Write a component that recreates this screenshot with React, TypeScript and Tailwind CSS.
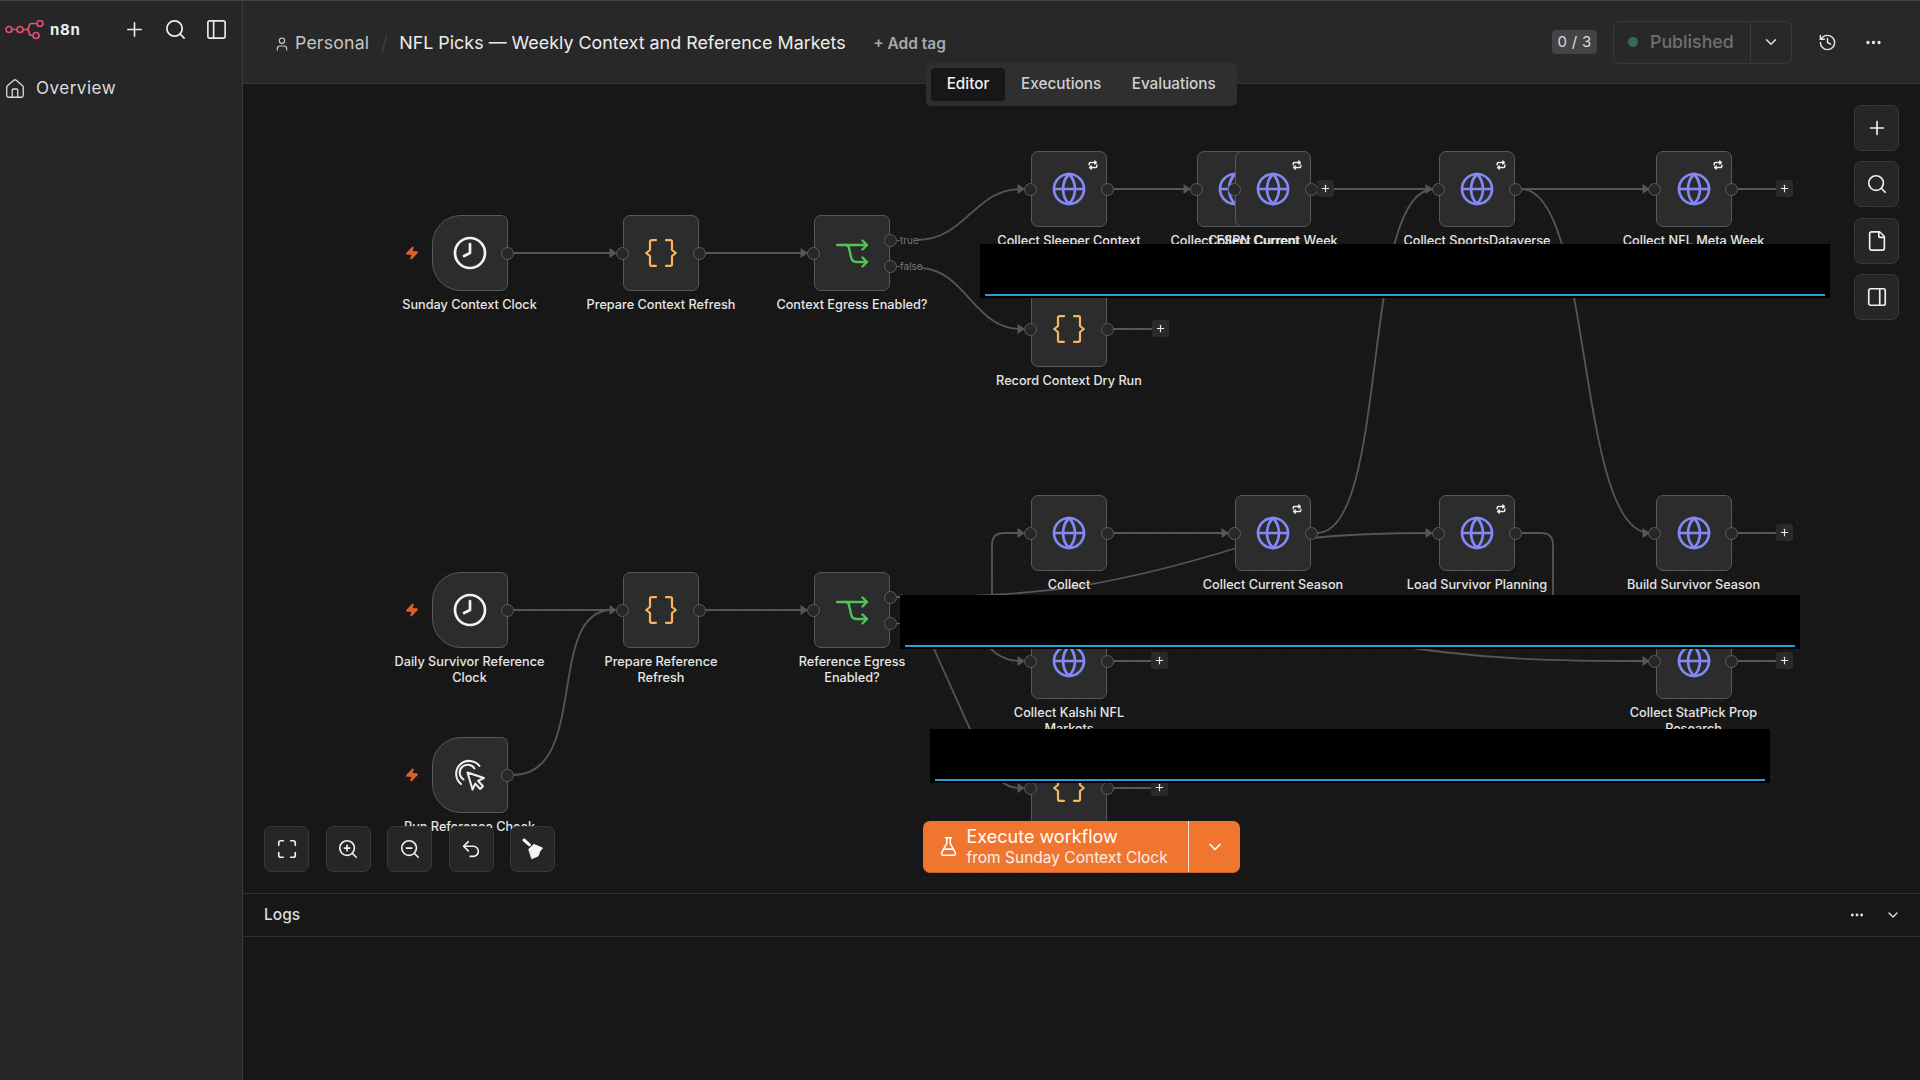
import React from "react";
import {
  Plus, Search, PanelLeft, PanelRight, House, User, Globe, Clock, FlaskConical, ChevronDown,
  History, Ellipsis, Maximize, ZoomIn, ZoomOut, Undo2, File, Zap,
} from "lucide-react";

const OX = 243;
const OY = 84;

type Kind = "globe" | "code" | "if" | "clock" | "click";
type N = {
  x: number; y: number; label: string; kind: Kind; retry?: boolean; plus?: number; hideIn?: boolean; trigger?: boolean; outs?: number[];
};

const nodes: N[] = [
  { x: 431.5, y: 215, label: "Sunday Context Clock", kind: "clock", trigger: true, hideIn: true },
  { x: 623, y: 215, label: "Prepare Context Refresh", kind: "code" },
  { x: 814, y: 215, label: "Context Egress Enabled?", kind: "if", outs: [25, 51] },
  { x: 1031, y: 151, label: "Collect Sleeper Context", kind: "globe", retry: true },
  { x: 1197, y: 151, label: "Collect ESPN Current", kind: "globe", retry: true },
  { x: 1235, y: 151, label: "Collect Current Week", kind: "globe", retry: true, plus: 1317 },
  { x: 1439, y: 151, label: "Collect SportsDataverse", kind: "globe", retry: true },
  { x: 1655.5, y: 151, label: "Collect NFL Meta Week", kind: "globe", retry: true, plus: 1776 },
  { x: 1031, y: 291, label: "Record Context Dry Run", kind: "code", plus: 1152 },
  { x: 431.5, y: 572, label: "Daily Survivor Reference Clock", kind: "clock", trigger: true, hideIn: true },
  { x: 623, y: 572, label: "Prepare Reference Refresh", kind: "code" },
  { x: 814, y: 572, label: "Reference Egress Enabled?", kind: "if", outs: [25, 51] },
  { x: 431.5, y: 737, label: "Run Reference Check", kind: "click", trigger: true, hideIn: true },
  { x: 1031, y: 495, label: "Collect", kind: "globe" },
  { x: 1235, y: 495, label: "Collect Current Season", kind: "globe", retry: true },
  { x: 1439, y: 495, label: "Load Survivor Planning", kind: "globe", retry: true },
  { x: 1655.5, y: 495, label: "Build Survivor Season", kind: "globe", plus: 1776 },
  { x: 1031, y: 623, label: "Collect Kalshi NFL Markets", kind: "globe", plus: 1151 },
  { x: 1655.5, y: 623, label: "Collect StatPick Prop Research", kind: "globe", plus: 1776 },
  { x: 1031, y: 750, label: "Record Reference Dry Run", kind: "code", plus: 1151 },
];

const wires = [
  "M513 253H612", "M705 253H803", "M917 240C965 240 975 189 1020 189", "M921 268C965 270 975 329 1020 329",
  "M1113 189H1192", "M1334 189H1434", "M1113 329H1152",
  "M1317 533C1390 533 1360 189 1434 189", "M1521 189H1650", "M1521 189C1594 189 1575 533 1650 533", "M1737 189H1776",
  "M513 610H612", "M513 775C590 775 545 610 612 610", "M705 610H803",
  "M1113 533H1230", "M897 597C1030 597 1100 590 1240 547", "M1313 538C1350 534 1390 533 1434 533",
  "M992 600V545Q992 533 1004 533H1020", "M1521 533H1541Q1553 533 1553 545V600",
  "M1737 533H1776", "M975 630C990 650 1000 661 1020 661", "M1113 661H1151", "M1360 640C1480 661 1560 661 1650 661", "M1737 661H1776",
  "M934 649L970 729L1000 780Q1008 788 1020 788", "M1113 788H1151",
];

const arrows: [number, number][] = [
  [617, 253], [808, 253], [1025, 189], [1025, 329], [1191, 189], [1433, 189], [1650, 189],
  [617, 610], [808, 610], [1025, 533], [1229, 533], [1433, 533], [1650, 533], [1025, 661], [1650, 661], [1025, 788],
];

function BracesIcon() {
  return (
    <svg width="32" height="28" viewBox="0 0 32 28" fill="none" stroke="#f5b562" strokeWidth="2.2" strokeLinejoin="round" strokeLinecap="round">
      <path d="M11 1.2H6.5A1.5 1.5 0 0 0 5 2.7V11L1.2 14 5 17v8.3a1.5 1.5 0 0 0 1.5 1.5H11" />
      <path d="M21 1.2h4.5A1.5 1.5 0 0 1 27 2.7V11l3.8 3-3.8 3v8.3a1.5 1.5 0 0 1-1.5 1.5H21" />
    </svg>
  );
}

function IfIcon() {
  return (
    <svg width="33" height="30" viewBox="0 0 33 30" fill="none" stroke="#4fc35c" strokeWidth="2.4" strokeLinejoin="round" strokeLinecap="round">
      <path d="M1 7H31M26.500 2.500 31 7l-4.500 4.500" />
      <path d="M10 7c2 0 2.600 1 3 3l2 9c.6 3.200 2.500 5 5.500 5H31M26.500 19.500 31 24l-4.500 4.500" />
    </svg>
  );
}

function ClickIcon() {
  return (
    <svg width="32" height="32" viewBox="0 0 32 32" fill="none" stroke="#f0f0f0" strokeWidth="2" strokeLinejoin="round" strokeLinecap="round">
      <path d="M7 25A13 13 0 1 1 25.500 7" />
      <path d="M9.500 20.500A8 8 0 1 1 20.500 9.500" />
      <path d="M13.500 13.500 30 19l-6 2.800 5 5.400-2.800 2.800-5-5.400-2.700 5.900z" />
    </svg>
  );
}

function BroomIcon() {
  return (
    <svg width="24" height="24" viewBox="0 0 24 24" fill="#f6f6f6" stroke="#f6f6f6" strokeLinejoin="round" strokeLinecap="round">
      <path d="M3 3 8.500 7.800" strokeWidth="3" />
      <path d="M8 12 13 7.500 21.500 11 19 14 17 19 11 21.500z" strokeWidth="1" />
    </svg>
  );
}

function RetryIcon() {
  return (
    <svg width="10" height="10" viewBox="0 0 10 10" fill="none" stroke="#f0f0f0" strokeWidth="1.400" strokeLinecap="round" strokeLinejoin="round" className="absolute left-[57px] top-[9px]">
      <path d="M1.200 5V3.700A1.200 1.200 0 0 1 2.400 2.500H8.300M6.700 1 8.400 2.500 6.700 4" />
      <path d="M8.800 5V6.300A1.200 1.200 0 0 1 7.600 7.500H1.700M3.300 6 1.600 7.500 3.300 9" />
    </svg>
  );
}

function Logo() {
  return (
    <svg width="39" height="20" viewBox="0 0 39 20" fill="none" stroke="#ea4b71" strokeWidth="1.700">
      <circle cx="4" cy="9.500" r="3" />
      <circle cx="15" cy="9.500" r="3" />
      <circle cx="35" cy="3.500" r="3" />
      <circle cx="31" cy="15.500" r="3" />
      <path d="M7 9.500h5M18 9.500h3c2 0 3-1 3-3 0-2 1-3 3-3h5M21 9.500c2 0 3 1 3 3 0 2 1 3 3 3h1" />
    </svg>
  );
}

function NodeIcon({ kind }: { kind: Kind }) {
  if (kind === "globe") return <Globe size={36} strokeWidth={1.800} color="#8289f7" />;
  if (kind === "code") return <BracesIcon />;
  if (kind === "if") return <IfIcon />;
  if (kind === "clock") return <Clock size={36} strokeWidth={1.800} color="#f2f2f2" className="-scale-x-100" />;
  return <ClickIcon />;
}

function Handle({ className }: { className: string }) {
  return <div className={`absolute h-[13px] w-[13px] rounded-full border-[1.5px] border-[#5c5c5c] bg-[#282828] ${className}`} />;
}

function WorkflowNode({ n }: { n: N }) {
  return (
    <div className="absolute h-[76px] w-[76px]" style={{ left: n.x - OX, top: n.y - OY }}>
      <div
        className={`flex h-full w-full items-center justify-center border-[1.5px] border-[#585858] bg-[#2c2c2c] ${
          n.trigger ? "rounded-l-[29px] rounded-r-[7px]" : "rounded-[7px]"
        }`}
      >
        <NodeIcon kind={n.kind} />
      </div>
      {n.retry && <RetryIcon />}
      {n.trigger && <Zap size={14} fill="#d9622b" color="#d9622b" className="absolute left-[-27px] top-[31px]" />}
      {!n.hideIn && <Handle className="left-[-7.500px] top-[31.500px]" />}
      {n.outs ? (
        <>
          <Handle className="left-[69.500px] top-[18.500px]" />
          <Handle className="left-[69.500px] top-[44.500px]" />
          <span className="absolute left-[86px] top-[19px] text-[10px] leading-[12px] text-[#777777]">true</span>
          <span className="absolute left-[86px] top-[45px] text-[10px] leading-[12px] text-[#777777]">false</span>
          <div className="absolute left-[83px] top-[25px] h-px w-[3px] bg-[#666666]" />
          <div className="absolute left-[83px] top-[51px] h-px w-[3px] bg-[#666666]" />
        </>
      ) : (
        <Handle className="left-[69.500px] top-[31.500px]" />
      )}
      {n.plus && (
        <div
          className="absolute top-[29px] flex h-[17px] w-[17px] items-center justify-center rounded-[3px] bg-[#2a2a2a]"
          style={{ left: n.plus - n.x }}
        >
          <Plus size={11} strokeWidth={2.500} color="#e8e8e8" />
        </div>
      )}
      <div className="absolute left-[-42px] top-[82px] w-[160px] text-center text-[12.700px] font-medium leading-[16px] text-[#e6e6e6]">
        {n.label}
      </div>
    </div>
  );
}

function Wires() {
  return (
    <svg className="absolute inset-0 h-full w-full" viewBox={`${OX} ${OY} 1677 809`} fill="none">
      {wires.map((d, i) => (
        <path key={i} d={d} stroke="#565656" strokeWidth="1.800" />
      ))}
      {arrows.map(([x, y], i) => (
        <path key={i} d={`M${x} ${y}L${x - 7.500} ${y - 5}V${y + 5}Z`} fill="#565656" />
      ))}
    </svg>
  );
}

function ToolBtn({ children }: { children: React.ReactNode }) {
  return (
    <div className="flex h-[46px] w-[45px] items-center justify-center rounded-[7px] border-[1.5px] border-[#383838] bg-[#262626] text-[#f0f0f0]">
      {children}
    </div>
  );
}

function Redaction({ className }: { className: string }) {
  return (
    <div className={`absolute flex h-[54px] flex-col justify-end bg-black px-[5px] pb-[2px] ${className}`}>
      <div className="h-[2px] bg-[#2a9fd6]" />
    </div>
  );
}

export default function App() {
  return (
    <div className="flex h-screen w-screen overflow-hidden border-t border-[#444444] bg-[#171717] font-['Inter',sans-serif] text-[#e6e6e6]">
      <aside className="flex w-[243px] shrink-0 flex-col border-r border-[#3a3a3a] bg-[#262626]">
        <div className="flex h-[57px] items-center pl-[5px] pr-[14px]">
          <Logo />
          <span className="ml-[6px] pt-[2px] text-[15px] font-bold tracking-[0.05em] text-[#eeeeee]">n8n</span>
          <div className="ml-auto flex items-center gap-[18px] text-[#ececec]">
            <Plus size={23} strokeWidth={1.700} />
            <Search size={23} strokeWidth={1.800} />
            <PanelLeft size={23} strokeWidth={1.700} />
          </div>
        </div>
        <div className="mt-[17px] flex h-[28px] items-center gap-[10px] pl-[4px]">
          <House size={22} strokeWidth={1.400} color="#dddddd" />
          <span className="text-[17px] tracking-[0.03em] text-[#dddddd]">Overview</span>
        </div>
      </aside>

      <main className="relative flex min-w-0 flex-1 flex-col">
        <header className="flex h-[83px] shrink-0 items-center border-b border-[#363636] bg-[#282828] pl-[31px] pr-[37px]">
          <div className="flex items-center pt-[3px]">
            <User size={16} strokeWidth={1.700} color="#cccccc" />
            <span className="ml-[5px] text-[17.700px] tracking-[0.01em] text-[#c4c4c4]">Personal</span>
            <span className="mx-[11.500px] text-[20px] font-light text-[#444444]">/</span>
            <span className="text-[17.900px] text-[#ececec]">NFL Picks — Weekly Context and Reference Markets</span>
            <span className="ml-[27.500px] text-[15.500px] font-semibold text-[#aaaaaa]">+ Add tag</span>
          </div>
          <div className="ml-auto flex items-center">
            <span className="flex h-[24px] w-[45px] items-center justify-center rounded-[4px] bg-[#444444] text-[15px] tracking-[0.02em] text-[#dddddd]">
              0 / 3
            </span>
            <div className="ml-[16px] flex h-[43px] w-[179px] items-center rounded-[7px] border-[1.5px] border-[#3a3a3a]">
              <div className="flex h-full flex-1 items-center gap-[12px] border-r-[1.5px] border-[#3a3a3a] pl-[14px]">
                <span className="h-[10px] w-[10px] rounded-full bg-[#37695f]" />
                <span className="text-[17.800px] font-medium text-[#6f6f6f]">Published</span>
              </div>
              <div className="flex w-[40px] items-center justify-center">
                <ChevronDown size={18} strokeWidth={2} color="#e0e0e0" />
              </div>
            </div>
            <History size={19} strokeWidth={1.800} color="#e8e8e8" className="ml-[26px]" />
            <Ellipsis size={19} strokeWidth={2.200} color="#e8e8e8" className="ml-[27px]" />
          </div>
        </header>

        <div className="absolute left-[683px] top-[62px] z-10 flex h-[43px] w-[311px] items-center rounded-[5px] bg-[#2f2f2f] pl-[5px] text-[15.300px] font-medium text-[#d0d0d0]">
          <span className="flex h-[33px] w-[74px] items-center justify-center rounded-[4px] bg-[#171717] text-[#f0f0f0]">Editor</span>
          <span className="ml-[16px]">Executions</span>
          <span className="ml-[30.500px]">Evaluations</span>
        </div>

        <div className="relative min-h-0 flex-1 overflow-hidden bg-[#171717] bg-[radial-gradient(circle,#303030_0.7px,transparent_1px)] bg-[size:12.670px_12.670px] bg-[position:4px_3px]">
          <Wires />
          {nodes.map((n) => (
            <WorkflowNode key={n.label} n={n} />
          ))}

          <Redaction className="left-[737px] top-[160px] w-[850px]" />
          <Redaction className="left-[657px] top-[511px] w-[900px]" />
          <Redaction className="left-[687px] top-[645px] w-[840px]" />

          <div className="absolute right-[21px] top-[21px] flex flex-col gap-[10.300px]">
            <ToolBtn><Plus size={22} strokeWidth={1.800} /></ToolBtn>
            <ToolBtn><Search size={22} strokeWidth={1.800} /></ToolBtn>
            <ToolBtn><File size={22} strokeWidth={1.800} /></ToolBtn>
            <ToolBtn><PanelRight size={22} strokeWidth={1.800} /></ToolBtn>
          </div>

          <div className="absolute bottom-[21px] left-[21px] flex gap-[16.500px]">
            <ToolBtn><Maximize size={22} strokeWidth={1.800} /></ToolBtn>
            <ToolBtn><ZoomIn size={22} strokeWidth={1.800} /></ToolBtn>
            <ToolBtn><ZoomOut size={22} strokeWidth={1.800} /></ToolBtn>
            <ToolBtn><Undo2 size={22} strokeWidth={1.800} /></ToolBtn>
            <ToolBtn><BroomIcon /></ToolBtn>
          </div>

          <div className="absolute left-[680px] top-[737px] flex h-[52px] w-[317px] rounded-[7px] border-b border-[#c9612a] bg-[#f07630] text-white">
            <div className="flex flex-1 items-center border-r border-[#f8e3d6] pl-[15px]">
              <FlaskConical size={21} strokeWidth={1.800} />
              <div className="ml-[7.500px] flex flex-col">
                <span className="text-[18px] font-normal leading-[21px]">Execute workflow</span>
                <span className="text-[15.500px] leading-[21px] text-[#fdeee4]">from Sunday Context Clock</span>
              </div>
            </div>
            <div className="flex w-[51px] items-center justify-center">
              <ChevronDown size={20} strokeWidth={2} />
            </div>
          </div>
        </div>

        <section className="h-[187px] shrink-0 border-t border-[#303030] bg-[#171717]">
          <div className="flex h-[43px] items-center border-b border-[#303030] pl-[21px] pr-[19.500px]">
            <span className="text-[15.500px] font-medium text-[#dddddd]">Logs</span>
            <div className="ml-auto flex items-center gap-[20px] text-[#e0e0e0]">
              <Ellipsis size={16} strokeWidth={2.200} />
              <ChevronDown size={16} strokeWidth={2} />
            </div>
          </div>
        </section>
      </main>
    </div>
  );
}
